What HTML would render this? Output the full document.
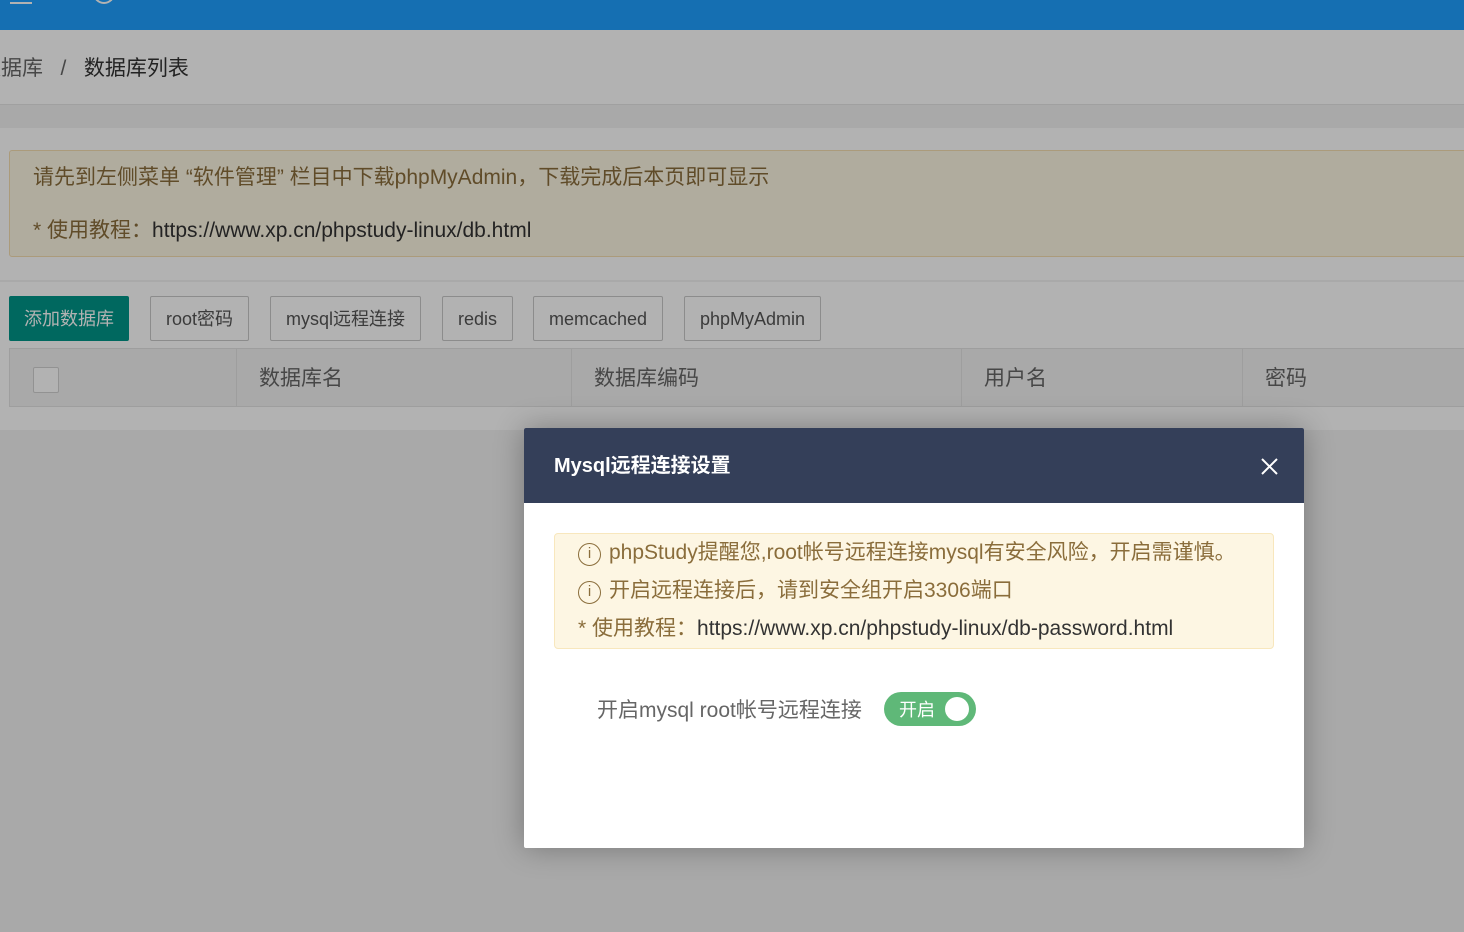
<!DOCTYPE html>
<html><head><meta charset="utf-8"><style>
*{box-sizing:border-box;margin:0;padding:0}
body{width:1464px;height:932px;overflow:hidden;background:#f2f2f2;font-family:"Liberation Sans","Noto Sans CJK SC",sans-serif;position:relative;color:#333}
.top{position:absolute;left:0;top:0;width:1464px;height:30px;background:#1fa0ff}
.bc{position:absolute;left:-20px;top:30px;width:1500px;height:75px;background:#fff;border-bottom:1px solid #e6e6e6;font-size:21px;line-height:78px;color:#666;white-space:nowrap}
.bc b{font-weight:normal;color:#333}
.panel{position:absolute;left:0;top:128px;width:1464px;height:152px;background:#fff}
.warn{position:absolute;left:9px;top:150px;width:1470px;height:107px;background:#fdf6e3;border:1px solid #f5deb0;border-radius:3px;font-size:21px;color:#8a6d3b;padding:10px 0 0 23px}
.warn p{height:53px}
.warn span{color:#333}
.card{position:absolute;left:0;top:282px;width:1464px;height:148px;background:#fff}
.btn{position:absolute;top:296px;height:45px;border:1px solid #c9c9c9;border-radius:2px;background:#fff;font-size:18px;line-height:45px;text-align:center;color:#555}
.th{position:absolute;left:9px;top:348px;width:1460px;height:59px;background:#f2f2f2;border:1px solid #e2e2e2;font-size:21px;color:#666}
.th div{position:absolute;top:0;height:57px;line-height:59px;border-left:1px solid #e2e2e2;padding-left:22px}
.mask{position:absolute;left:0;top:0;width:1464px;height:932px;background:rgba(0,0,0,.3)}
.dlg{position:absolute;left:524px;top:428px;width:780px;height:420px;background:#fff;box-shadow:0 0 30px rgba(0,0,0,.3);border-radius:2px}
.dh{height:75px;background:#343f59;color:#fff;font-size:20px;font-weight:bold;line-height:77px;padding-left:30px;position:relative;border-radius:2px 2px 0 0}
.tip{position:absolute;left:30px;top:105px;width:720px;height:116px;background:#fdf6e3;border:1px solid #f8e7bd;border-radius:4px;font-size:21px;color:#8a6d3b;padding:4px 0 0 23px;white-space:nowrap}
.tip p{height:38px;line-height:30px}
.ic{display:inline-block;width:23px;height:23px;border:1.5px solid #8a6d3b;border-radius:50%;font-size:15px;line-height:20px;text-align:center;vertical-align:1px;margin-right:8px;font-family:"Liberation Sans",sans-serif}
.sw{position:absolute;left:360px;top:264px;width:92px;height:34px;border-radius:17px;background:#5fb878;color:#fff;font-size:18px;line-height:36px;padding-left:15px}
.sw i{position:absolute;right:7px;top:5px;width:24px;height:24px;border-radius:50%;background:#fff}
</style></head><body>
<div class="top"><div style="position:absolute;left:10px;top:2px;width:22px;height:2px;background:#fff"></div><div style="position:absolute;left:93px;top:-12px;width:22px;height:16px;border:2px solid #fff;border-top:none;border-radius:0 0 11px 11px"></div></div>
<div class="bc">数据库 &nbsp;&nbsp;/&nbsp;&nbsp; <b>数据库列表</b></div>
<div class="panel"></div>
<div class="warn"><p>请先到左侧菜单 “软件管理” 栏目中下载phpMyAdmin，下载完成后本页即可显示</p><p>* 使用教程：<span>https://www.xp.cn/phpstudy-linux/db.html</span></p></div>
<div class="card"></div>
<div class="btn" style="left:9px;width:120px;background:#009688;border-color:#009688;color:#fff">添加数据库</div>
<div class="btn" style="left:150px;width:99px">root密码</div>
<div class="btn" style="left:270px;width:151px">mysql远程连接</div>
<div class="btn" style="left:442px;width:71px">redis</div>
<div class="btn" style="left:533px;width:130px">memcached</div>
<div class="btn" style="left:684px;width:137px">phpMyAdmin</div>
<div class="th">
<span style="position:absolute;left:23px;top:18px;width:26px;height:26px;background:#fff;border:1px solid #d2d2d2;border-radius:2px"></span>
<div style="left:226px">数据库名</div><div style="left:561px">数据库编码</div><div style="left:951px">用户名</div><div style="left:1232px">密码</div>
</div>
<div class="mask"></div>
<div class="dlg">
<div class="dh">Mysql远程连接设置<svg style="position:absolute;left:737px;top:30px" width="17" height="17" viewBox="0 0 17 17"><path d="M1 1L16 16M16 1L1 16" stroke="#fff" stroke-width="2"/></svg></div>
<div class="tip"><p><span class="ic">i</span>phpStudy提醒您,root帐号远程连接mysql有安全风险，开启需谨慎。</p><p><span class="ic">i</span>开启远程连接后，请到安全组开启3306端口</p><p>* 使用教程：<span style="color:#333">https://www.xp.cn/phpstudy-linux/db-password.html</span></p></div>
<div style="position:absolute;left:73px;top:266px;font-size:21px;color:#666">开启mysql root帐号远程连接</div>
<div class="sw">开启<i></i></div>
</div>
</body></html>
